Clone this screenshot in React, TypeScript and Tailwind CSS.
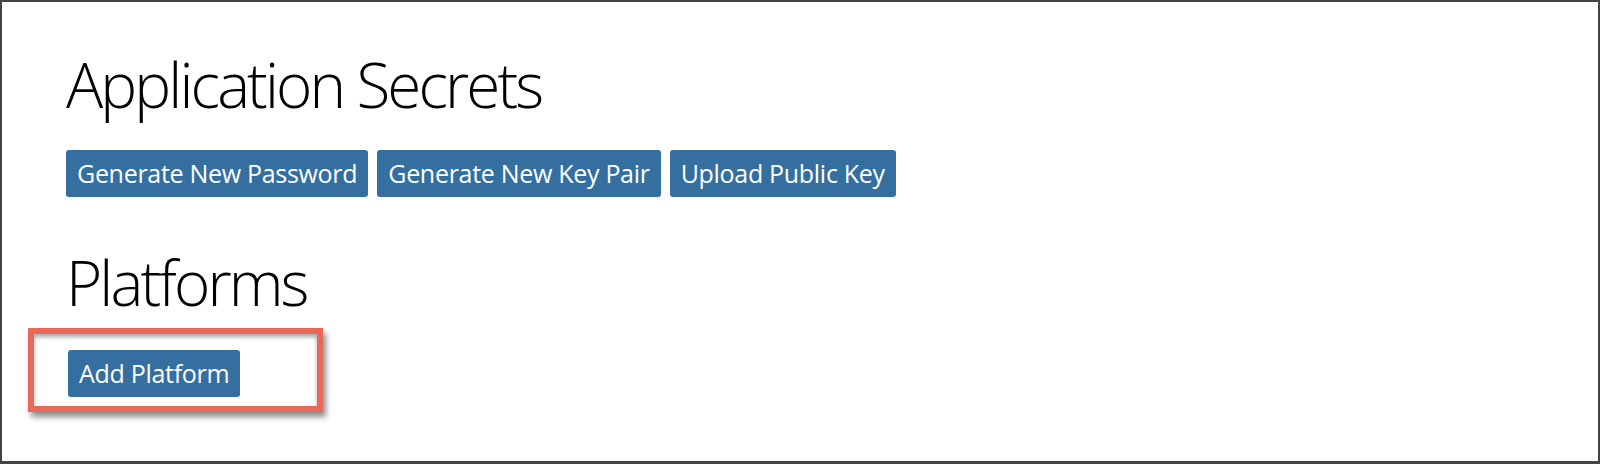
export default function App() {
  const secretButtons = ["Generate New Password", "Generate New Key Pair", "Upload Public Key"];

  return (
    <div
      className="h-[464px] w-[1600px] border-2 border-b-[3px] border-[#444444] bg-white pl-[64px] text-black"
      style={{ fontFamily: '"Open Sans", "Noto Sans", sans-serif' }}
    >
      <h1 className="pt-[42px] text-[62px] font-light leading-[80px] tracking-[-2.9px]">
        Application Secrets
      </h1>
      <div className="mt-[26px] flex gap-[9px]">
        {secretButtons.map((label) => (
          <button
            key={label}
            type="button"
            className="h-[47px] rounded-[3px] bg-[#346fa0] px-[11px] text-[25px] leading-[47px] tracking-[-0.3px] text-white"
          >
            {label}
          </button>
        ))}
      </div>
      <h2 className="mt-[45px] text-[62px] font-light leading-[80px] tracking-[-2.9px]">
        Platforms
      </h2>
      <div className="ml-[-38px] mt-[6px] w-[295px] border-[6px] border-[#e8695b] pb-[9px] pl-[34px] pt-[16px] shadow-[inset_0_3px_4px_rgba(0,0,0,0.35),3px_5px_6px_rgba(0,0,0,0.45)]">
        <button
          type="button"
          className="h-[47px] rounded-[3px] bg-[#346fa0] px-[11px] text-[25px] leading-[47px] tracking-[-0.3px] text-white"
        >
          Add Platform
        </button>
      </div>
    </div>
  );
}
